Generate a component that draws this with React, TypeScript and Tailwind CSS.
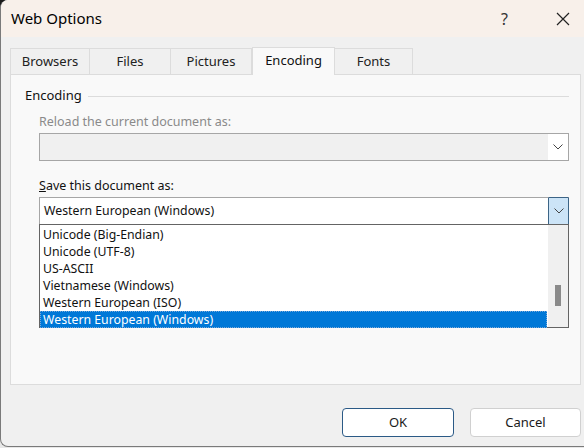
import React from "react";

const font = { fontFamily: '"Segoe UI", "Noto Sans", sans-serif' };

function Chevron() {
  return (
    <svg width="10" height="6" viewBox="0 0 10 6">
      <path d="M0.5 0.5 L5 5 L9.5 0.5" fill="none" stroke="#444" strokeWidth="1" />
    </svg>
  );
}

const tabs = [
  { label: "Browsers", w: 80 },
  { label: "Files", w: 81 },
  { label: "Pictures", w: 81 },
  { label: "Encoding", w: 83, active: true },
  { label: "Fonts", w: 78 },
];

const items = [
  "Unicode (Big-Endian)",
  "Unicode (UTF-8)",
  "US-ASCII",
  "Vietnamese (Windows)",
  "Western European (ISO)",
  "Western European (Windows)",
];

export default function App() {
  return (
    <div className="w-[584px] h-[448px] bg-gradient-to-b from-[#1a1a1a] via-[#888] to-[#e8e8e8] overflow-hidden" style={font}>
      <div className="w-[584px] h-[447px] flex flex-col bg-[#f0f0f0] border-l border-b border-[#7a7a7a] rounded-tl-[8px] rounded-bl-[8px] overflow-hidden text-[12.5px] text-[#1a1a1a]">
        {/* Title bar */}
        <div className="h-[37px] shrink-0 bg-[#f8f0ea] flex items-center pl-[10px]">
          <span className="text-[15px] text-black">Web Options</span>
          <span className="ml-auto mr-[48px] text-[16px] text-[#333]">?</span>
          <svg width="14" height="14" viewBox="0 0 14 14" className="mr-[14px]">
            <path d="M1 1 L13 13 M13 1 L1 13" stroke="#222" strokeWidth="1.2" />
          </svg>
        </div>

        <div className="flex flex-col pl-[9px] pr-[3px]">
          {/* Tabs */}
          <div className="flex items-end h-[37px]">
            {tabs.map((t) =>
              t.active ? (
                <div
                  key={t.label}
                  className="h-[28px] -mb-px relative z-10 bg-[#f9f9f9] border border-b-0 border-[#dcdcdc] flex items-center justify-center text-[13px] text-[#111] pb-[2px]"
                  style={{ width: t.w }}
                >
                  {t.label}
                </div>
              ) : (
                <div
                  key={t.label}
                  className="h-[26px] border-t border-r border-[#dcdcdc] first:border-l bg-[#f0f0f0] flex items-center justify-center text-[13px] text-[#222]"
                  style={{ width: t.w }}
                >
                  {t.label}
                </div>
              )
            )}
          </div>

          {/* Panel */}
          <div className="h-[311px] bg-[#f9f9f9] border border-[#dcdcdc] flex flex-col pl-[14px] pr-[11px]">
            <div className="flex items-center mt-[12px] h-[18px]">
              <span className="text-[13px] text-[#111]">Encoding</span>
              <div className="flex-1 h-px bg-[#dcdcdc] ml-[6px]" />
            </div>
            <div className="pl-[14px] flex flex-col">
              <div className="mt-[8px] h-[18px] text-[12.5px] text-[#8a8a8a] leading-[18px]">Reload the current document as:</div>
              <div className="mt-[2px] h-[28px] bg-[#f0f0f0] border border-[#a6a6a6] flex justify-end">
                <div className="w-[20px] h-full bg-white flex items-center justify-center">
                  <Chevron />
                </div>
              </div>
              <div className="mt-[16px] h-[18px] text-[12.5px] text-[#111] leading-[18px]">
                <span className="underline">S</span>ave this document as:
              </div>
              <div className="mt-[2px] h-[28px] bg-white border border-[#a6a6a6] flex items-center pl-[4px]">
                <span className="text-[12.3px] text-[#111]">Western European (Windows)</span>
                <div className="ml-auto -mr-px w-[21px] h-[28px] bg-[#cce4f7] border border-[#3c6486] rounded-[1px] flex items-center justify-center">
                  <Chevron />
                </div>
              </div>
              <div className="h-[104px] -mt-px bg-white border border-[#646464] flex">
                <div className="flex-1 flex flex-col pt-px">
                  {items.map((it, i) =>
                    i === items.length - 1 ? (
                      <div key={it} className="h-[17px] bg-[#0078d7] text-white pl-[3px] text-[12.3px] leading-[17px] mr-px outline-1 outline-dotted outline-[#7aa8d8] -outline-offset-1">
                        {it}
                      </div>
                    ) : (
                      <div key={it} className="h-[17px] pl-[3px] text-[12.3px] text-[#111] leading-[17px]">
                        {it}
                      </div>
                    )
                  )}
                </div>
                <div className="w-[20px] bg-[#f0f0f0] flex flex-col items-center">
                  <div className="mt-[60px] w-[6px] h-[21px] bg-[#8a8a8a]" />
                </div>
              </div>
            </div>
          </div>

          {/* Buttons */}
          <div className="flex justify-end gap-[16px] mt-[23px]">
            <button className="w-[112px] h-[29px] bg-white border border-[#2b5a86] rounded-[4px] text-[13px] text-[#1a1a1a]" style={font}>
              OK
            </button>
            <button className="w-[111px] h-[29px] bg-white border border-[#d0d0d0] rounded-[4px] text-[13px] text-[#1a1a1a]" style={font}>
              Cancel
            </button>
          </div>
        </div>
      </div>
    </div>
  );
}
